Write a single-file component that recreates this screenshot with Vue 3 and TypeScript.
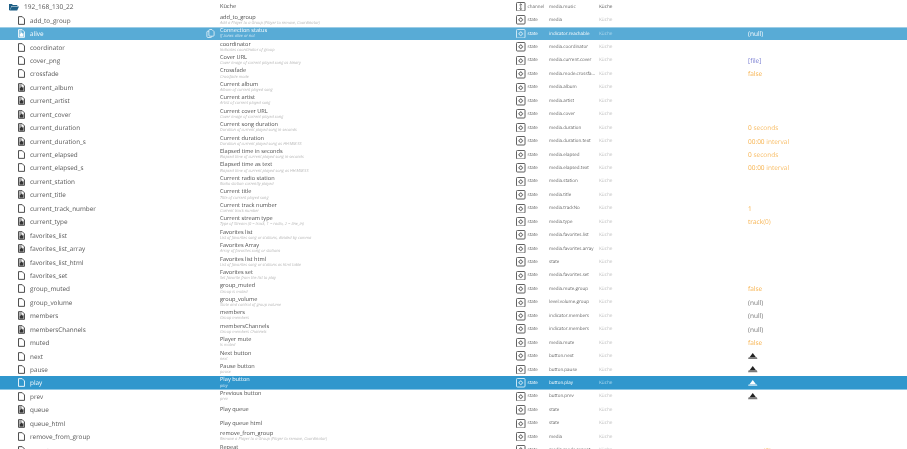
<script setup lang="ts">
interface Row {
  name: string
  title: string
  desc?: string
  role: string
  filled?: boolean
  value?: string
  suffix?: string
  kind?: string
  sel?: string
}
const rows: Row[] = [
  { name: 'add_to_group', title: 'add_to_group', desc: 'Add a Player to a Group (Player to remove, Coordinator)', role: 'media' },
  { name: 'alive', title: 'Connection status', desc: 'If zones alive or not', role: 'indicator.reachable', filled: true, value: '(null)', kind: 'null', sel: 'light' },
  { name: 'coordinator', title: 'coordinator', desc: 'Indicates coordinator of group', role: 'media.coordinator' },
  { name: 'cover_png', title: 'Cover URL', desc: 'Cover image of current played song as binary', role: 'media.current.cover', value: '[file]', kind: 'blob' },
  { name: 'crossfade', title: 'Crossfade', desc: 'Crossfade mode', role: 'media.mode.crossfa…', value: 'false', kind: 'warn' },
  { name: 'current_album', title: 'Current album', desc: 'Album of current played song', role: 'media.album', filled: true },
  { name: 'current_artist', title: 'Current artist', desc: 'Artist of current played song', role: 'media.artist', filled: true },
  { name: 'current_cover', title: 'Current cover URL', desc: 'Cover image of current played song', role: 'media.cover', filled: true },
  { name: 'current_duration', title: 'Current song duration', desc: 'Duration of current played song in seconds', role: 'media.duration', filled: true, value: '0', suffix: ' seconds', kind: 'warn' },
  { name: 'current_duration_s', title: 'Current duration', desc: 'Duration of current played song as HH:MM:SS', role: 'media.duration.text', filled: true, value: '00:00', suffix: ' interval', kind: 'warn' },
  { name: 'current_elapsed', title: 'Elapsed time in seconds', desc: 'Elapsed time of current played song in seconds', role: 'media.elapsed', value: '0', suffix: ' seconds', kind: 'warn' },
  { name: 'current_elapsed_s', title: 'Elapsed time as text', desc: 'Elapsed time of current played song as HH:MM:SS', role: 'media.elapsed.text', value: '00:00', suffix: ' interval', kind: 'warn' },
  { name: 'current_station', title: 'Current radio station', desc: 'Radio station currently played', role: 'media.station', filled: true },
  { name: 'current_title', title: 'Current title', desc: 'Title of current played song', role: 'media.title', filled: true },
  { name: 'current_track_number', title: 'Current track number', desc: 'Current track number', role: 'media.trackNo', value: '1', kind: 'warn' },
  { name: 'current_type', title: 'Current stream type', desc: 'Type of Stream (0 = track, 1 = radio, 2 = line_in)', role: 'media.type', filled: true, value: 'track', suffix: '(0)', kind: 'warn' },
  { name: 'favorites_list', title: 'Favorites list', desc: 'List of favorites song or stations, divided by comma', role: 'media.favorites.list', filled: true },
  { name: 'favorites_list_array', title: 'Favorites Array', desc: 'Array of favorites song or stations', role: 'media.favorites.array', filled: true },
  { name: 'favorites_list_html', title: 'Favorites list html', desc: 'List of favorites song or stations as html table', role: 'state', filled: true },
  { name: 'favorites_set', title: 'Favorites set', desc: 'Set favorite from the list to play', role: 'media.favorites.set' },
  { name: 'group_muted', title: 'group_muted', desc: 'Group is muted', role: 'media.mute.group', value: 'false', kind: 'warn' },
  { name: 'group_volume', title: 'group_volume', desc: 'State and control of group volume', role: 'level.volume.group', value: '(null)', kind: 'null' },
  { name: 'members', title: 'members', desc: 'Group members', role: 'indicator.members', filled: true, value: '(null)', kind: 'null' },
  { name: 'membersChannels', title: 'membersChannels', desc: 'Group members Channels', role: 'indicator.members', filled: true, value: '(null)', kind: 'null' },
  { name: 'muted', title: 'Player mute', desc: 'Is muted', role: 'media.mute', value: 'false', kind: 'warn' },
  { name: 'next', title: 'Next button', desc: 'next', role: 'button.next', kind: 'button' },
  { name: 'pause', title: 'Pause button', desc: 'pause', role: 'button.pause', kind: 'button' },
  { name: 'play', title: 'Play button', desc: 'play', role: 'button.play', kind: 'button', sel: 'dark' },
  { name: 'prev', title: 'Previous button', desc: 'prev', role: 'button.prev', kind: 'button' },
  { name: 'queue', title: 'Play queue', role: 'state', filled: true },
  { name: 'queue_html', title: 'Play queue html', role: 'state', filled: true },
  { name: 'remove_from_group', title: 'remove_from_group', desc: 'Remove a Player to a Group (Player to remove, Coordinator)', role: 'media' },
  { name: 'repeat', title: 'Repeat', desc: 'Repeat mode', role: 'media.mode.repeat', value: 'none', suffix: '(0)', kind: 'warn' },
]
</script>

<template>
  <div class="page">
    <div class="row root">
      <div class="tree">
        <svg class="folder" viewBox="0 0 12 9">
          <path d="M0 1h3.6l1 1H10v1.2H3L1 8.5H0z" fill="#1d5f86" />
          <path d="M3.2 3.8H12L9.8 8.8H.9z" fill="#1d5f86" />
        </svg>
        <span class="rootname">192_168_130_22</span>
      </div>
      <div class="titlecell"><span class="title">Küche</span></div>
      <div class="type">
        <svg class="ticon" viewBox="0 0 10 10">
          <rect x=".5" y=".5" width="9" height="9" rx="1" fill="none" stroke="currentColor" stroke-width="1" />
          <path d="M5 2v6M3.6 3.2 5 1.9l1.4 1.3M3.6 6.8 5 8.1l1.4-1.3" fill="none" stroke="currentColor" stroke-width=".8" />
        </svg>
        <span class="typename">channel</span>
      </div>
      <div class="role">media.music</div>
      <div class="room strong">Küche</div>
      <div class="value"></div>
    </div>

    <div v-for="r in rows" :key="r.name" class="row" :class="r.sel">
      <div class="tree child">
        <svg class="file" viewBox="0 0 8 10">
          <path d="M.6.6h4.2l2.6 2.6v6.2H.6z" fill="none" stroke="currentColor" stroke-width="1" stroke-linejoin="round" />
          <path v-if="r.filled" d="M1.4 1.2h2.8v2.8h2.6v4.8H1.4z" fill="currentColor" opacity=".45" />
          <path v-if="r.filled" d="M4 3.9 5.9 6.1v2.2H2.1V6.1z" fill="currentColor" />
        </svg>
        <span class="name">{{ r.name }}</span>
      </div>
      <div class="titlecell">
        <svg v-if="r.sel === 'light'" class="copy" viewBox="0 0 10 10">
          <path d="M3.2 1.6c0-.6.4-1 1-1h2.4l2.4 2.4v4c0 .6-.4 1-1 1H4.2c-.6 0-1-.4-1-1z" fill="none" stroke="currentColor" stroke-width=".8" />
          <path d="M3.2 2.4H2c-.6 0-1 .4-1 1v5c0 .6.4 1 1 1h3.4c.6 0 1-.4 1-1" fill="none" stroke="currentColor" stroke-width=".8" />
        </svg>
        <span class="title">{{ r.title }}</span>
        <span v-if="r.desc" class="desc">{{ r.desc }}</span>
      </div>
      <div class="type">
        <svg class="ticon" viewBox="0 0 10 10">
          <rect x=".5" y=".5" width="9" height="9" rx="1" fill="none" stroke="currentColor" stroke-width="1" />
          <circle cx="5" cy="5" r="1.7" fill="none" stroke="currentColor" stroke-width=".9" />
          <path d="M5 2.4v.9M5 6.7v.9M2.4 5h.9M6.7 5h.9" stroke="currentColor" stroke-width=".7" />
        </svg>
        <span class="typename">state</span>
      </div>
      <div class="role">{{ r.role }}</div>
      <div class="room">Küche</div>
      <div class="value" :class="r.kind">
        <svg v-if="r.kind === 'button'" class="btn" viewBox="0 0 10 7">
          <path d="M5 0 8.4 4.4H1.6z" fill="currentColor" />
          <path d="M.6 4.6h8.8L10 6.6H0z" fill="currentColor" opacity=".6" />
        </svg>
        <template v-else-if="r.value">{{ r.value }}<span class="suffix">{{ r.suffix }}</span></template>
      </div>
    </div>
  </div>
</template>

<style scoped>
.page {
  width: 907px;
  height: 449px;
  overflow: hidden;
  background: #fff;
  color: #555;
  font-family: "Open Sans", "Noto Sans", sans-serif;
  text-rendering: geometricPrecision;
  filter: blur(0.3px);
}
.row {
  height: 13.45px;
  display: grid;
  grid-template-columns: 220px 296px 33px 50px 149px 1fr;
  align-items: center;
  white-space: nowrap;
}
.row.light {
  background: #58abd6;
  box-shadow: inset 0 1px 0 #9ccde6;
  color: #fff;
}
.row.dark {
  background: #3097cd;
  box-shadow: inset 0 -1px 0 #8cc6e4;
  color: #fff;
}
.tree {
  display: flex;
  align-items: center;
  padding-left: 9px;
  gap: 5px;
  color: #333;
}
.tree.child {
  padding-left: 18px;
  gap: 5px;
}
.light .tree,
.dark .tree {
  color: #fff;
}
.folder {
  width: 10px;
  height: 8px;
}
.file {
  width: 7px;
  height: 9px;
  flex: none;
}
.rootname {
  font-size: 6.5px;
  color: #555;
}
.name {
  font-size: 6.35px;
  color: #555;
}
.light .name,
.dark .name,
.light .title,
.dark .title,
.light .typename,
.dark .typename,
.light .role,
.dark .role {
  color: #fff;
}
.titlecell {
  position: relative;
  display: flex;
  flex-direction: column;
  justify-content: center;
  height: 13px;
  line-height: 1;
}
.title {
  font-size: 5.6px;
  line-height: 7.2px;
  color: #4a4a4a;
}
.desc {
  font-size: 4.05px;
  line-height: 5.8px;
  font-style: italic;
  color: #b8b8b8;
}
.light .desc,
.dark .desc {
  color: #cfe6f3;
}
.copy {
  position: absolute;
  left: -14px;
  top: 2px;
  width: 9px;
  height: 9px;
  color: #fff;
}
.type {
  display: flex;
  align-items: center;
  gap: 2px;
  color: #555;
}
.ticon {
  width: 9.5px;
  height: 9.5px;
  flex: none;
}
.light .type,
.dark .type {
  color: #d5ecf7;
}
.typename,
.role {
  font-size: 4.5px;
  color: #666;
}
.room {
  font-size: 4.7px;
  color: #c4c4c4;
}
.room.strong {
  color: #666;
}
.light .room,
.dark .room {
  color: #a9d5ec;
}
.value {
  font-size: 6.5px;
  display: flex;
  align-items: center;
  white-space: pre;
}
.warn {
  color: #f7b14a;
}
.suffix {
  opacity: 0.85;
}
.null {
  color: #777;
}
.blob {
  color: #7a7fd2;
}
.light .value {
  color: #fff;
}
.btn {
  width: 9.5px;
  height: 6.6px;
  color: #222;
}
.dark .btn {
  color: #fff;
}
</style>

<style>
html,
body {
  margin: 0;
  background: #fff;
  overflow: hidden;
}
</style>
